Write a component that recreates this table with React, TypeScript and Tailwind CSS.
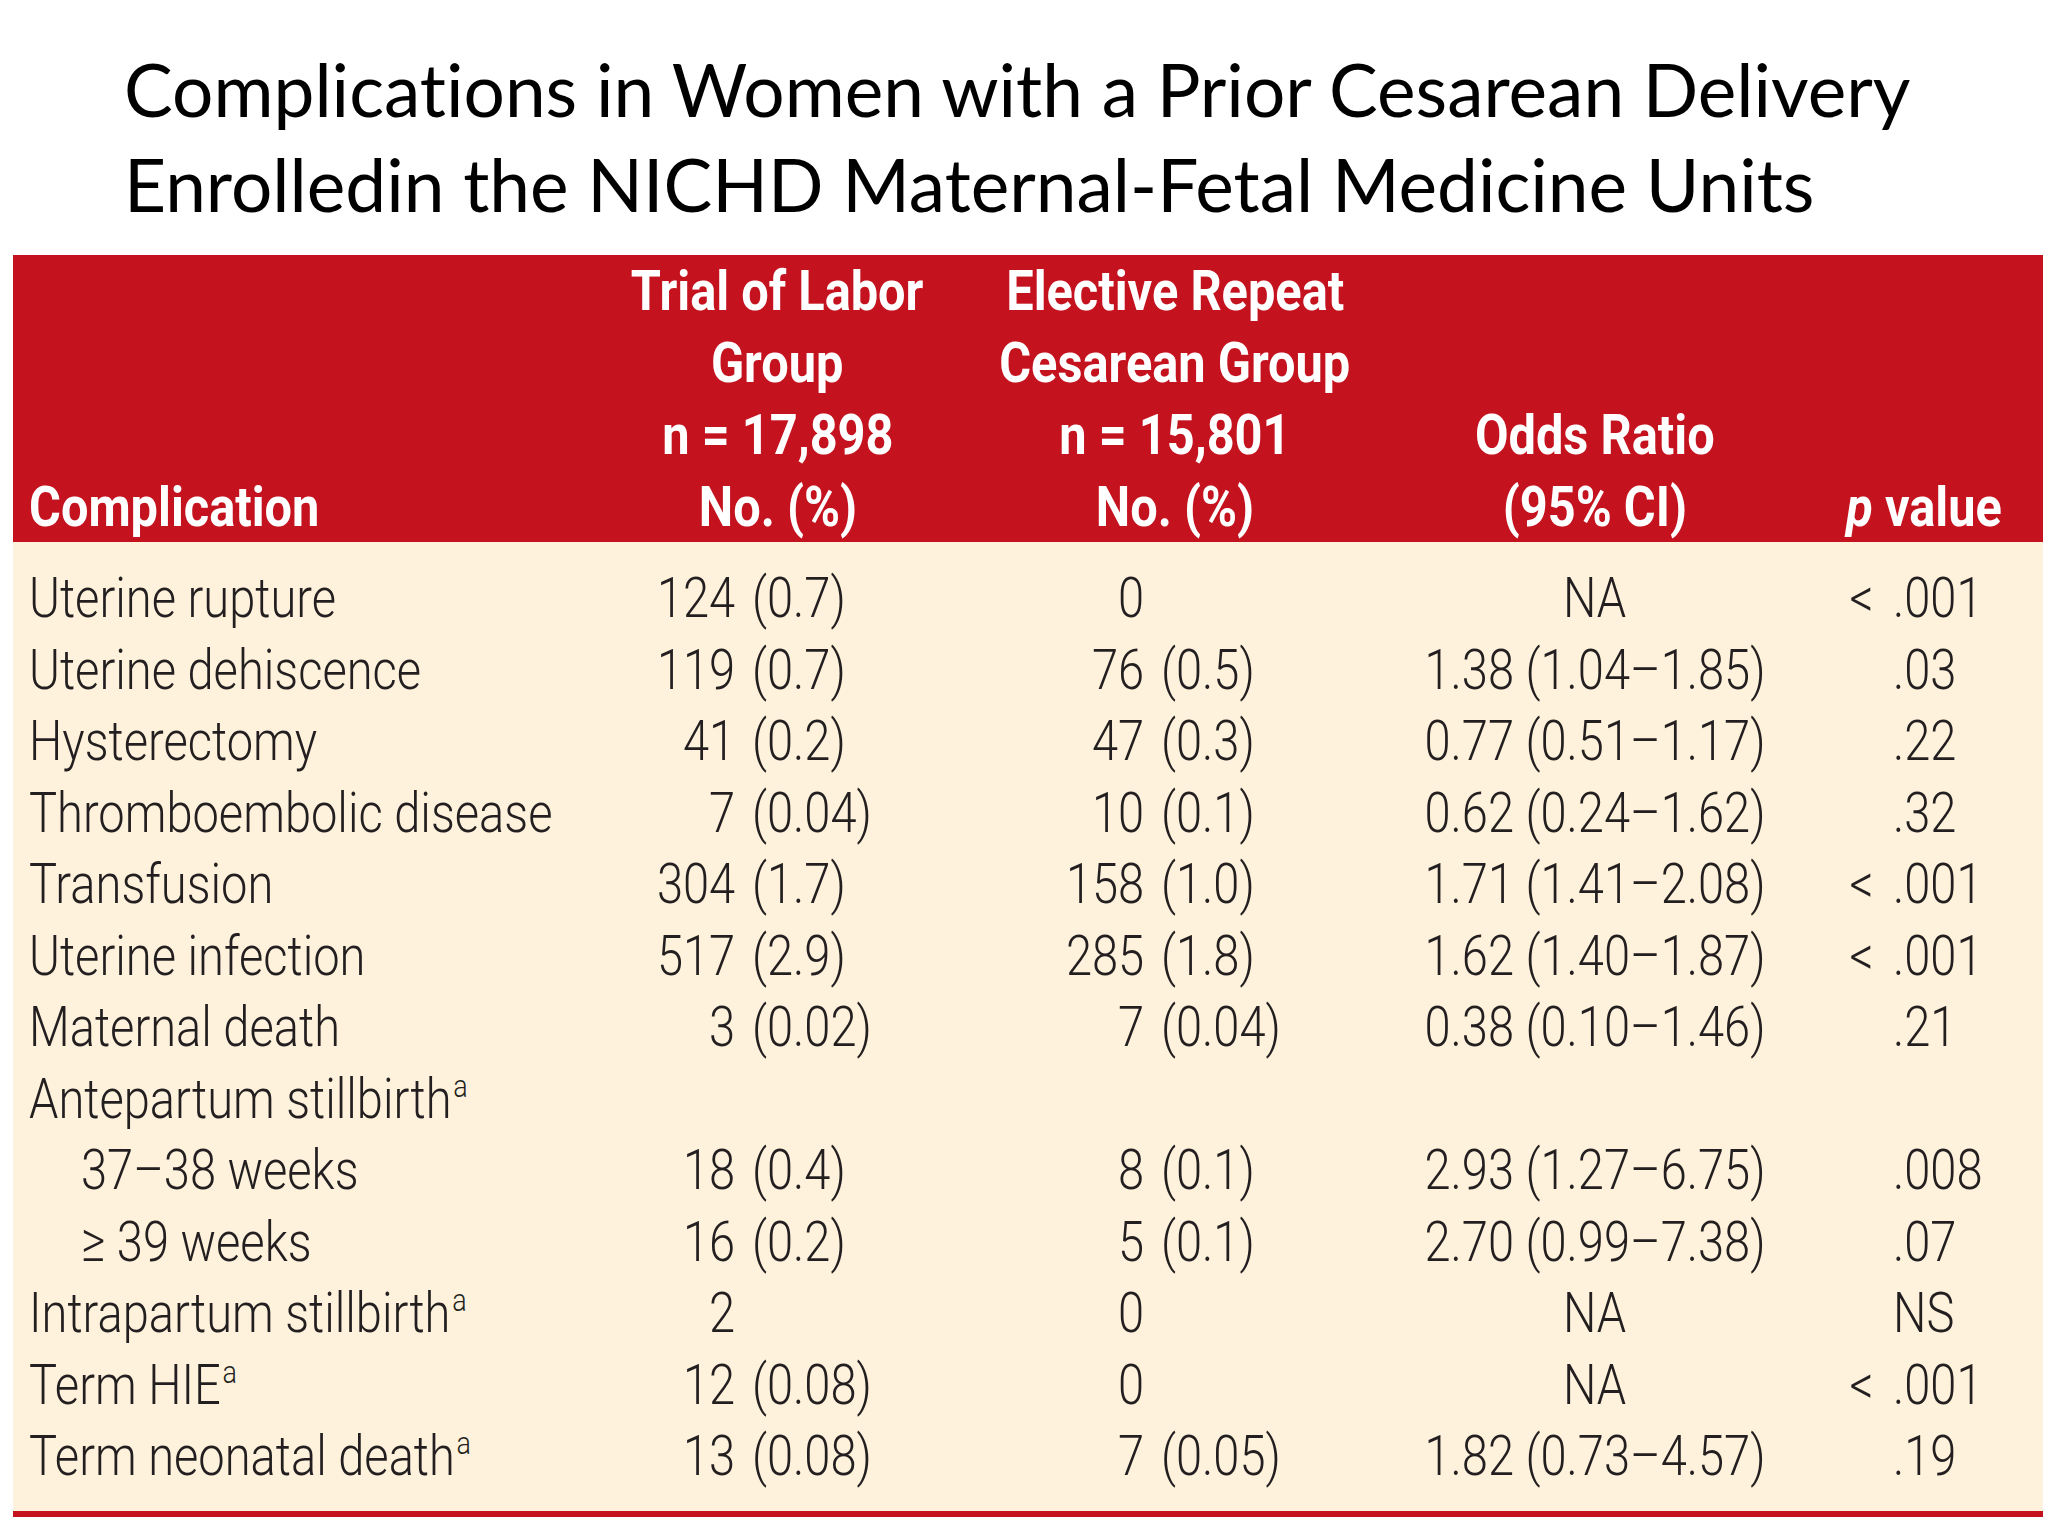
import React from 'react';

type Row = {
    label: string;
    sup?: boolean;
    indent?: boolean;
    a?: [string, string?];
    b?: [string, string?];
    or?: string;
    lt?: boolean;
    p?: string;
};

const rows: Row[] = [
    { label: 'Uterine rupture', a: ['124', '(0.7)'], b: ['0'], or: 'NA', lt: true, p: '.001' },
    { label: 'Uterine dehiscence', a: ['119', '(0.7)'], b: ['76', '(0.5)'], or: '1.38 (1.04–1.85)', p: '.03' },
    { label: 'Hysterectomy', a: ['41', '(0.2)'], b: ['47', '(0.3)'], or: '0.77 (0.51–1.17)', p: '.22' },
    { label: 'Thromboembolic disease', a: ['7', '(0.04)'], b: ['10', '(0.1)'], or: '0.62 (0.24–1.62)', p: '.32' },
    { label: 'Transfusion', a: ['304', '(1.7)'], b: ['158', '(1.0)'], or: '1.71 (1.41–2.08)', lt: true, p: '.001' },
    { label: 'Uterine infection', a: ['517', '(2.9)'], b: ['285', '(1.8)'], or: '1.62 (1.40–1.87)', lt: true, p: '.001' },
    { label: 'Maternal death', a: ['3', '(0.02)'], b: ['7', '(0.04)'], or: '0.38 (0.10–1.46)', p: '.21' },
    { label: 'Antepartum stillbirth', sup: true },
    { label: '37–38 weeks', indent: true, a: ['18', '(0.4)'], b: ['8', '(0.1)'], or: '2.93 (1.27–6.75)', p: '.008' },
    { label: '≥ 39 weeks', indent: true, a: ['16', '(0.2)'], b: ['5', '(0.1)'], or: '2.70 (0.99–7.38)', p: '.07' },
    { label: 'Intrapartum stillbirth', sup: true, a: ['2'], b: ['0'], or: 'NA', p: 'NS' },
    { label: 'Term HIE', sup: true, a: ['12', '(0.08)'], b: ['0'], or: 'NA', lt: true, p: '.001' },
    { label: 'Term neonatal death', sup: true, a: ['13', '(0.08)'], b: ['7', '(0.05)'], or: '1.82 (0.73–4.57)', p: '.19' },
];

const cols = 'grid grid-cols-[607px_315px_480px_360px_268px]';

// the source table uses a condensed face; squeeze the text horizontally
function Narrow({ children, origin, head }: { children: React.ReactNode; origin: string; head?: boolean }) {
    return (
        <span className={`inline-block whitespace-nowrap ${head ? 'scale-x-[0.87]' : 'scale-x-[0.84]'} ${origin}`}>
            {children}
        </span>
    );
}

function Count({ v, numW }: { v?: [string, string?]; numW: string }) {
    if (!v) return <div />;
    return (
        <div className="flex">
            <span className={`${numW} shrink-0 text-right`}>
                <Narrow origin="origin-right">{v[0]}</Narrow>
            </span>
            {v[1] && (
                <span className="ml-[17px]">
                    <Narrow origin="origin-left">{v[1]}</Narrow>
                </span>
            )}
        </div>
    );
}

function HeadLines({ lines }: { lines: string[] }) {
    return (
        <div className="flex flex-col items-center">
            {lines.map((l) => (
                <Narrow key={l} origin="origin-center" head>
                    {l}
                </Narrow>
            ))}
        </div>
    );
}

export default function App() {
    return (
        <div className="w-[2048px] h-[1536px] bg-white overflow-hidden">
            <h1 className="pl-[124px] pt-[42px] text-[73px] leading-[95px] text-black font-normal font-['Lato',sans-serif] whitespace-nowrap [font-variant-ligatures:none]">
                Complications in Women with a Prior Cesarean Delivery
                <br />
                Enrolledin the NICHD Maternal-Fetal Medicine Units
            </h1>

            <div className="mt-[23px] ml-[13px] w-[2030px] h-[1257px] bg-[#fef2dc] font-['Roboto',sans-serif]">
                {/* header */}
                <div className={`${cols} h-[287px] bg-[#c4131f] text-white font-bold text-[56px] leading-[72px] items-end`}>
                    <div className="pl-[16px]">
                        <Narrow origin="origin-left" head>
                            Complication
                        </Narrow>
                    </div>
                    <HeadLines lines={['Trial of Labor', 'Group', 'n = 17,898', 'No. (%)']} />
                    <HeadLines lines={['Elective Repeat', 'Cesarean Group', 'n = 15,801', 'No. (%)']} />
                    <HeadLines lines={['Odds Ratio', '(95% CI)']} />
                    <div className="text-right pr-[41px]">
                        <Narrow origin="origin-right" head>
                            <span className="italic">p</span> value
                        </Narrow>
                    </div>
                </div>

                {/* body */}
                <div className="pt-[21px] pb-[18px] text-[#231f20] font-light text-[56px] leading-[71.5px]">
                    {rows.map((r) => (
                        <div key={r.label} className={`${cols} h-[71.5px]`}>
                            <div className={r.indent ? 'pl-[68px]' : 'pl-[16px]'}>
                                <Narrow origin="origin-left">
                                    {r.label}
                                    {r.sup && <span className="relative -top-[21px] text-[32px] leading-none ml-[2px]">a</span>}
                                </Narrow>
                            </div>
                            <Count v={r.a} numW="w-[115px]" />
                            <Count v={r.b} numW="w-[209px]" />
                            <div className="flex justify-center">
                                {r.or && <Narrow origin="origin-center">{r.or}</Narrow>}
                            </div>
                            <div className="flex">
                                <span className="w-[99px] shrink-0 text-right">
                                    {r.lt && <Narrow origin="origin-right">{'<'}</Narrow>}
                                </span>
                                <span className="ml-[19px]">
                                    {r.p && <Narrow origin="origin-left">{r.p}</Narrow>}
                                </span>
                            </div>
                        </div>
                    ))}
                </div>
                <div className="h-[6px] bg-[#c4131f]" />
            </div>
        </div>
    );
}
